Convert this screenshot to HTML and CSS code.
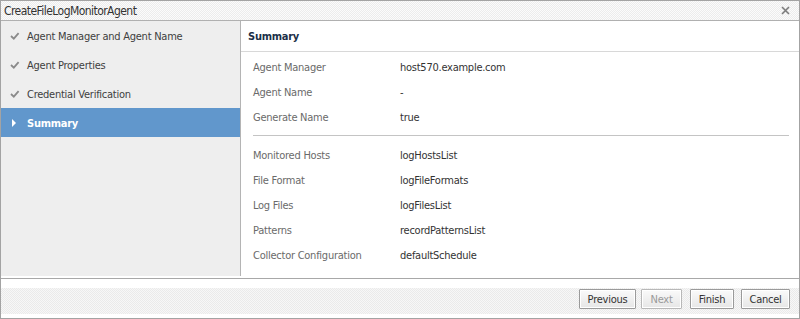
FILE: index.html
```html
<!DOCTYPE html>
<html>
<head>
<meta charset="utf-8">
<link rel="stylesheet" href="styles.css">
</head>
<body>
<div class="window">
  <div class="titlebar">
    <span class="title">CreateFileLogMonitorAgent</span>
    <svg class="close" width="9" height="9" viewBox="0 0 9 9"><path d="M1 1 L8 8 M8 1 L1 8" stroke="#7a7a7a" stroke-width="1.6" fill="none"/></svg>
  </div>
  <div class="body">
    <div class="nav">
      <div class="step done"><svg class="check" width="10" height="8" viewBox="0 0 10 8"><path d="M1 4 L3.8 6.6 L8.6 1.2" stroke="#8a8a8a" stroke-width="1.8" fill="none"/></svg><span>Agent Manager and Agent Name</span></div>
      <div class="step done"><svg class="check" width="10" height="8" viewBox="0 0 10 8"><path d="M1 4 L3.8 6.6 L8.6 1.2" stroke="#8a8a8a" stroke-width="1.8" fill="none"/></svg><span>Agent Properties</span></div>
      <div class="step done"><svg class="check" width="10" height="8" viewBox="0 0 10 8"><path d="M1 4 L3.8 6.6 L8.6 1.2" stroke="#8a8a8a" stroke-width="1.8" fill="none"/></svg><span>Credential Verification</span></div>
      <div class="step active"><svg class="arrow" width="10" height="8" viewBox="0 0 10 8"><path d="M2 0 L6 4 L2 8 Z" fill="#ffffff"/></svg><span>Summary</span></div>
    </div>
    <div class="main">
      <div class="header">Summary</div>
      <div class="content">
        <div class="group">
          <div class="row"><span class="label">Agent Manager</span><span class="value">host570.example.com</span></div>
          <div class="row"><span class="label">Agent Name</span><span class="value">-</span></div>
          <div class="row"><span class="label">Generate Name</span><span class="value">true</span></div>
        </div>
        <div class="sep"></div>
        <div class="group">
          <div class="row"><span class="label">Monitored Hosts</span><span class="value">logHostsList</span></div>
          <div class="row"><span class="label">File Format</span><span class="value">logFileFormats</span></div>
          <div class="row"><span class="label">Log Files</span><span class="value">logFilesList</span></div>
          <div class="row"><span class="label">Patterns</span><span class="value">recordPatternsList</span></div>
          <div class="row"><span class="label">Collector Configuration</span><span class="value">defaultSchedule</span></div>
        </div>
      </div>
    </div>
  </div>
  <div class="footer">
    <div class="bar">
      <button class="btn btn-prev">Previous</button>
      <button class="btn btn-next" disabled>Next</button>
      <button class="btn btn-finish">Finish</button>
      <button class="btn btn-cancel">Cancel</button>
    </div>
  </div>
</div>
</body>
</html>
```
FILE: styles.css
```css
html, body {
  margin: 0;
  padding: 0;
  background: #ffffff;
}
body {
  font-family: "DejaVu Sans Condensed", "DejaVu Sans", "Liberation Sans", sans-serif;
  font-size: 11px;
  letter-spacing: -0.25px;
  color: #333333;
}
.window {
  width: 800px;
  height: 319px;
  box-sizing: border-box;
  border: 1px solid #a3a3a3;
  display: flex;
  flex-direction: column;
  overflow: hidden;
}
.titlebar {
  height: 19px;
  flex: none;
  border-bottom: 1px solid #b0b0b0;
  display: flex;
  align-items: center;
  justify-content: space-between;
  padding: 0 9px 0 3px;
  background: repeating-conic-gradient(#ececec 0 25%, #fbfbfb 0 50%) 0 0 / 2px 2px;
}
.title {
  font-size: 12px;
  color: #333;
  letter-spacing: -0.55px;
}
.close {
  display: block;
  margin-top: -1px;
}
.body {
  flex: 1;
  display: flex;
  padding-bottom: 2px;
  min-height: 0;
}
.nav {
  width: 239px;
  flex: none;
  background: #eeeeee;
  border-right: 1px solid #b4b4b4;
}
.step {
  height: 29px;
  box-sizing: border-box;
  padding-top: 1px;
  display: flex;
  align-items: center;
  padding-left: 9px;
  color: #404040;
}
.step svg {
  flex: none;
  margin-right: 7px;
}
.step.active {
  background: #6197cc;
  color: #ffffff;
  font-weight: bold;
}
.main {
  flex: 1;
  display: flex;
  flex-direction: column;
  min-width: 0;
}
.header {
  height: 30px;
  flex: none;
  border-bottom: 1px solid #d8d8d8;
  display: flex;
  align-items: center;
  padding-left: 7px;
  font-weight: bold;
  color: #1c2f48;
}
.content {
  padding: 3px 10px 0 12px;
}
.row {
  height: 25px;
  display: flex;
  align-items: center;
}
.label {
  width: 147px;
  flex: none;
  color: #6a6a6a;
}
.value {
  color: #333333;
}
.sep {
  height: 1px;
  background: #c4c4c4;
  margin: 5px 0 7px 0;
}
.footer {
  flex: none;
  height: 40px;
  border-top: 1px solid #a8a8a8;
  padding-top: 9px;
  box-sizing: border-box;
}
.bar {
  height: 26px;
  display: flex;
  justify-content: flex-end;
  align-items: flex-start;
  padding: 1px 9px 0 0;
  box-sizing: border-box;
  background: repeating-conic-gradient(#eaeaea 0 25%, #f7f7f7 0 50%) 0 0 / 2px 2px;
}
.btn {
  height: 20px;
  padding: 0 3px;
  font-family: inherit;
  font-size: 11px;
  letter-spacing: -0.25px;
  color: #333;
  border: 1px solid #9a9a9a;
  border-radius: 1px;
  background: linear-gradient(#fafafa, #e6e6e6);
  box-shadow: inset 0 0 0 1px #ffffff;
  margin: 0;
}
.btn-prev { width: 57px; }
.btn-next { width: 41px; margin-left: 5px; color: #9a9a9a; border-color: #b8b8b8; }
.btn-finish { width: 44px; margin-left: 8px; }
.btn-cancel { width: 49px; margin-left: 7px; }
```
